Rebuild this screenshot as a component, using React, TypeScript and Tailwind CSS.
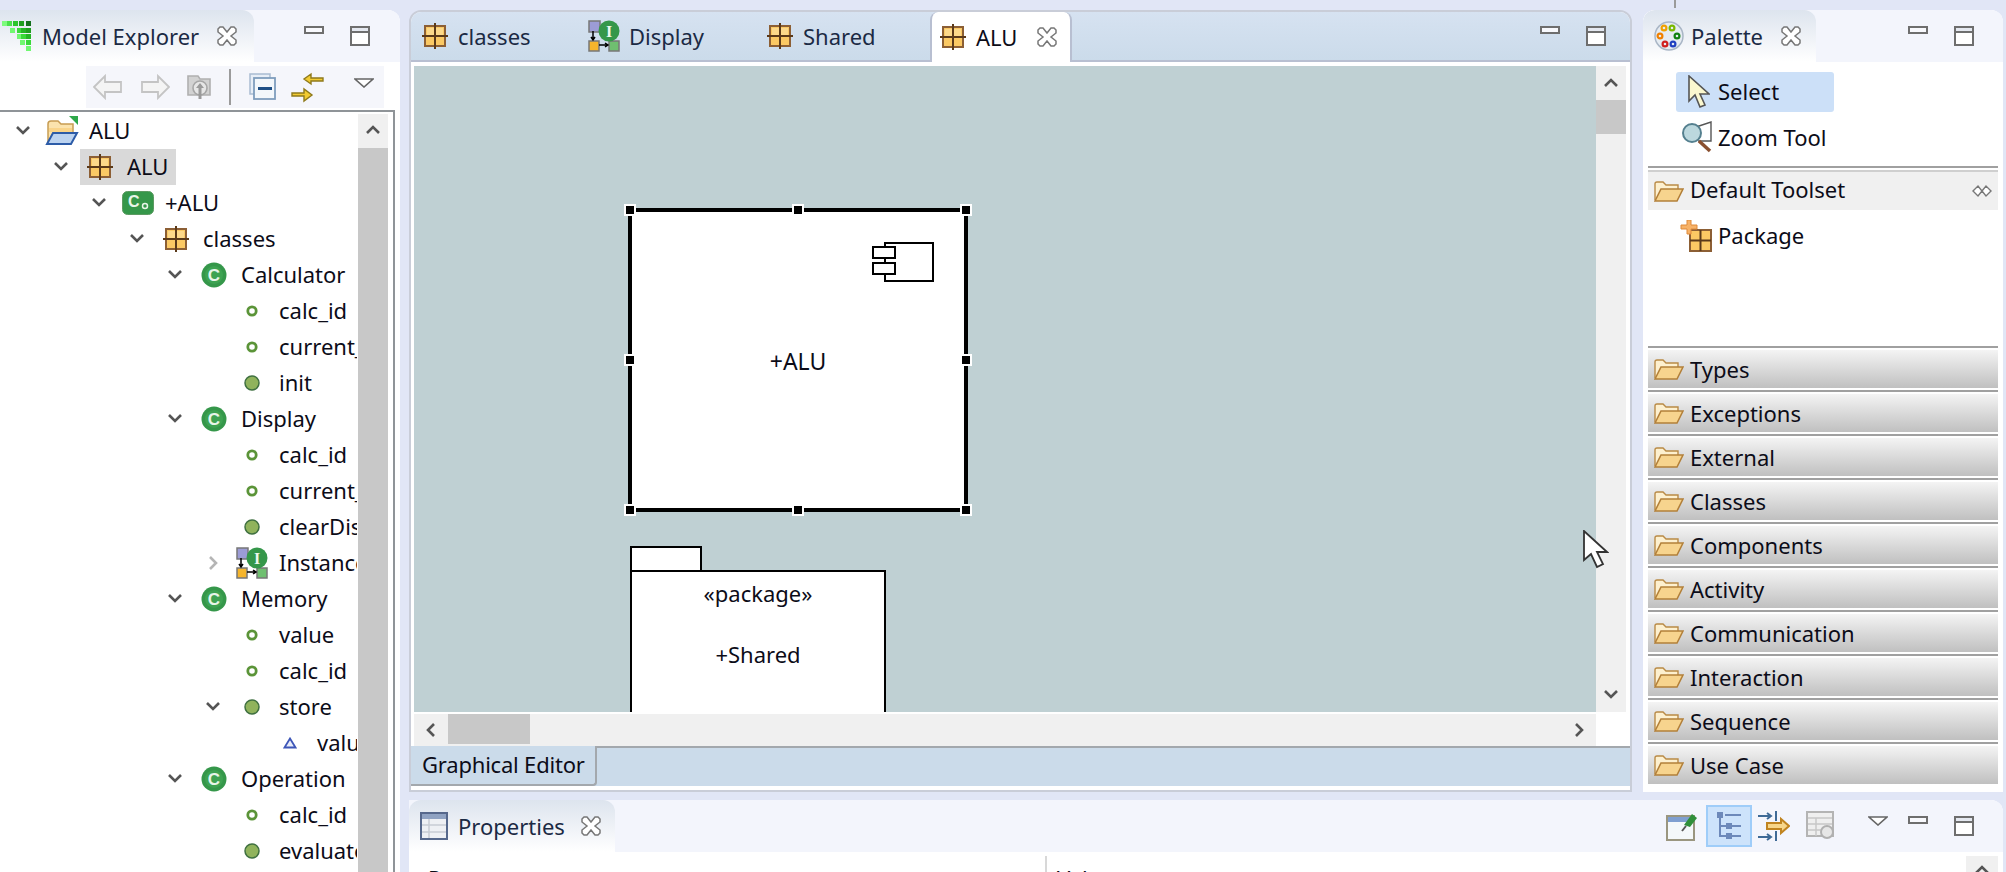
import React from 'react';

const FONT = "font-['Noto_Sans',sans-serif]";

const Chevron = ({ dir, color = '#555' }: { dir: 'down' | 'right' | 'up' | 'left'; color?: string }) => {
  const d = {
    down: 'M2 3 L8 9 L14 3',
    up: 'M2 9 L8 3 L14 9',
    right: 'M5 1 L11 7 L5 13',
    left: 'M11 1 L5 7 L11 13',
  }[dir];
  return (
    <svg width="16" height="14" viewBox="0 0 16 14">
      <path d={d} fill="none" stroke={color} strokeWidth="2.6" />
    </svg>
  );
};

const PackageIcon = () => (
  <svg width="26" height="26" viewBox="0 0 26 26">
    <rect x="3" y="3" width="20" height="20" fill="#fbc964" stroke="#8c5f35" strokeWidth="2" />
    <rect x="5" y="5" width="7" height="7" fill="#fdd98a" />
    <rect x="14" y="5" width="7" height="7" fill="#fdd98a" />
    <path d="M13 0 V26 M0 13 H26" stroke="#5b3a1a" strokeWidth="2" />
  </svg>
);

const ClassIcon = () => (
  <svg width="26" height="26" viewBox="0 0 26 26">
    <circle cx="13" cy="13" r="12.5" fill="#35974a" />
    <circle cx="13" cy="13" r="9" fill="#3ea352" />
    <text x="13" y="19" textAnchor="middle" fontSize="17" fontWeight="700" fill="#e8f5e8" fontFamily="Liberation Sans">C</text>
  </svg>
);

const ComponentClassIcon = () => (
  <svg width="32" height="24" viewBox="0 0 32 24">
    <rect x="0.5" y="0.5" width="31" height="23" rx="5" fill="#35974a" stroke="#5c9a62" />
    <text x="6" y="16" fontSize="16" fontWeight="700" fill="#e8f5e8" fontFamily="Liberation Sans">C</text>
    <circle cx="23" cy="15" r="2.5" fill="none" stroke="#e8f5e8" strokeWidth="1.5" />
  </svg>
);

const AttrIcon = () => (
  <svg width="12" height="12" viewBox="0 0 12 12">
    <circle cx="6" cy="6" r="4.2" fill="#fff" stroke="#5b9438" strokeWidth="2.8" />
  </svg>
);

const OpIcon = () => (
  <svg width="16" height="16" viewBox="0 0 16 16">
    <circle cx="8" cy="8" r="7" fill="#90b35c" stroke="#3f7040" strokeWidth="1.5" />
  </svg>
);

const ParamIcon = () => (
  <svg width="14" height="12" viewBox="0 0 14 12">
    <path d="M7 1.5 L12.5 10.5 H1.5 Z" fill="#e8ecfa" stroke="#3d56b8" strokeWidth="1.8" />
  </svg>
);

const InstanceIcon = () => (
  <svg width="32" height="32" viewBox="0 0 32 32">
    <rect x="1" y="1" width="11" height="11" fill="#9c9cd6" stroke="#777" strokeWidth="1.5" />
    <rect x="1" y="21" width="10" height="10" fill="#f6b52c" stroke="#777" strokeWidth="1.5" />
    <rect x="21" y="21" width="10" height="10" fill="#6fbf70" stroke="#777" strokeWidth="1.5" />
    <path d="M5 11 V20 M3 17 L5 20 L7 17 M11 25 H20 M17 23 L20 25 L17 27" fill="none" stroke="#000" strokeWidth="1.5" />
    <circle cx="21" cy="11" r="10.5" fill="#35974a" />
    <text x="21" y="17" textAnchor="middle" fontSize="16" fontWeight="700" fill="#eef8ee" fontFamily="Liberation Serif">I</text>
  </svg>
);

const ProjectIcon = () => (
  <svg width="34" height="30" viewBox="0 0 34 30">
    <path d="M3 26 V8 Q3 5 6 5 H13 L16 8 H28 V16" fill="#fbe3ad" stroke="#c79c52" strokeWidth="1.5" />
    <path d="M4 12 H27 V16 H4 Z" fill="#f9d48a" />
    <path d="M2 28 L8 17 H32 L26 28 Z" fill="#bcd3f0" stroke="#2d5ca8" strokeWidth="2" />
    <path d="M24 0 H33 V9 Z" fill="#2ea84a" />
  </svg>
);

const FolderIcon = () => (
  <svg width="30" height="22" viewBox="0 0 30 22">
    <path d="M1 20 V4 Q1 2 3 2 H9 L12 5 H24 V10" fill="#fdf0cf" stroke="#b98a46" strokeWidth="1.4" />
    <path d="M1 21 L7 9 H29 L23 21 Z" fill="#f7d48e" stroke="#b3803a" strokeWidth="1.6" />
  </svg>
);

const CloseIcon = () => (
  <svg width="20" height="20" viewBox="0 0 20 20">
    <path
      d="M1 3 L3 1 L6 1 L10 6 L14 1 L17 1 L19 3 L19 6 L14 10 L19 14 L19 17 L17 19 L14 19 L10 14 L6 19 L3 19 L1 17 L1 14 L6 10 L1 6 Z"
      fill="#fff"
      stroke="#777"
      strokeWidth="1.5"
    />
  </svg>
);

const WinControls = () => (
  <div className="flex items-start gap-[26px]">
    <div className="w-[20px] h-[8px] border-2 border-[#6e6e6e] bg-[#f8f9fd]" />
    <div className="w-[20px] h-[20px] border-2 border-[#6e6e6e] bg-white">
      <div className="h-[3px] bg-[#e4e8f0] border-b-2 border-[#6e6e6e] box-content" />
    </div>
  </div>
);

const MenuTriangle = () => (
  <svg width="20" height="10" viewBox="0 0 20 10">
    <path d="M1 1 H19 L10 9 Z" fill="#fff" stroke="#666" strokeWidth="1.6" />
  </svg>
);

const ExplorerLogo = () => (
  <svg width="30" height="30" viewBox="0 0 30 30">
    {[
      [0, 0, '#7dfb7d'], [5, 0, '#4be04b'], [11, 0, '#2bc42b'], [17, 0, '#1f9e1f'], [24, 0, '#14701c'],
      [8, 7, '#70f870'], [15, 7, '#39d839'], [19, 7, '#25b425'], [24, 7, '#1f9e1f'],
      [15, 13, '#70f870'], [19, 13, '#39d839'], [24, 13, '#25b425'],
      [18, 19, '#70f870'], [24, 19, '#39d839'],
      [24, 25, '#70f870'],
    ].map(([x, y, c], i) => (
      <rect key={i} x={x as number} y={y as number} width="5" height="5" fill={c as string} />
    ))}
  </svg>
);

const PaletteLogo = () => (
  <svg width="30" height="30" viewBox="0 0 30 30">
    <circle cx="15" cy="15" r="14" fill="#e6ecf2" stroke="#a9b6c6" strokeWidth="1.5" />
    {[
      [10, 7, '#f0a000'], [18, 7, '#7ab800'], [6, 15, '#f08000'], [23, 15, '#108010'],
      [11, 23, '#d02020'], [19, 23, '#2040c0'],
    ].map(([x, y, c], i) => (
      <circle key={i} cx={x as number} cy={y as number} r="2.4" fill="none" stroke={c as string} strokeWidth="2.2" />
    ))}
  </svg>
);

const rows: { d: number; icon: string; label: string; chev?: 'down' | 'right'; selected?: boolean }[] = [
  { d: 0, icon: 'project', label: 'ALU', chev: 'down' },
  { d: 1, icon: 'package', label: 'ALU', chev: 'down', selected: true },
  { d: 2, icon: 'component', label: '+ALU', chev: 'down' },
  { d: 3, icon: 'package', label: 'classes', chev: 'down' },
  { d: 4, icon: 'class', label: 'Calculator', chev: 'down' },
  { d: 5, icon: 'attr', label: 'calc_id' },
  { d: 5, icon: 'attr', label: 'current_value' },
  { d: 5, icon: 'op', label: 'init' },
  { d: 4, icon: 'class', label: 'Display', chev: 'down' },
  { d: 5, icon: 'attr', label: 'calc_id' },
  { d: 5, icon: 'attr', label: 'current_value' },
  { d: 5, icon: 'op', label: 'clearDisplay' },
  { d: 5, icon: 'instance', label: 'InstanceDiagram', chev: 'right' },
  { d: 4, icon: 'class', label: 'Memory', chev: 'down' },
  { d: 5, icon: 'attr', label: 'value' },
  { d: 5, icon: 'attr', label: 'calc_id' },
  { d: 5, icon: 'op', label: 'store', chev: 'down' },
  { d: 6, icon: 'param', label: 'value' },
  { d: 4, icon: 'class', label: 'Operation', chev: 'down' },
  { d: 5, icon: 'attr', label: 'calc_id' },
  { d: 5, icon: 'op', label: 'evaluate' },
];

const treeIcon = (name: string) => {
  switch (name) {
    case 'project': return <ProjectIcon />;
    case 'package': return <PackageIcon />;
    case 'component': return <ComponentClassIcon />;
    case 'class': return <ClassIcon />;
    case 'attr': return <AttrIcon />;
    case 'op': return <OpIcon />;
    case 'param': return <ParamIcon />;
    default: return <InstanceIcon />;
  }
};

const TreeRow = ({ d, icon, label, chev, selected }: (typeof rows)[number]) => (
  <div className="flex items-center h-[36px] whitespace-nowrap" style={{ paddingLeft: 38 * d + 10 }}>
    <div className="w-[26px] flex items-center justify-center shrink-0">
      {chev && <Chevron dir={chev} color={chev === 'right' ? '#b5b5b5' : '#555'} />}
    </div>
    <div className={`ml-[6px] h-[36px] flex items-center ${selected ? 'bg-[#d9d9d9]' : ''}`}>
      <div className="w-[40px] flex items-center justify-center shrink-0">{treeIcon(icon)}</div>
      <span className="pl-[7px] pr-[8px] pb-[2px] text-[22px] leading-[34px] text-[#0c0c18]">{label}</span>
    </div>
  </div>
);

const ModelExplorer = () => (
  <aside className="w-[400px] h-[862px] shrink-0 bg-white rounded-tr-[12px] flex flex-col overflow-hidden">
    <div className="h-[52px] shrink-0 flex bg-[#f3f5fc]">
      <div className="w-[254px] h-full flex items-center pl-[2px] bg-linear-to-b from-[#dde4ee] to-white rounded-tr-[12px]">
        <ExplorerLogo />
        <span className="ml-[10px] text-[22px] text-[#1b2a44]">Model Explorer</span>
        <span className="ml-[18px] flex"><CloseIcon /></span>
      </div>
      <div className="ml-[50px] pt-[16px]"><WinControls /></div>
    </div>
    <div className="h-[48px] shrink-0 pt-[4px] pl-[86px]">
      <div className="w-[298px] h-[42px] bg-[#f5f6fb] flex items-center pl-[7px]">
        <svg width="30" height="26" viewBox="0 0 30 26">
          <path d="M1 13 L12 2 V8 H28 V18 H12 V24 Z" fill="#f4f4f4" stroke="#c4c4c4" strokeWidth="1.8" />
        </svg>
        <svg className="ml-[17px]" width="30" height="26" viewBox="0 0 30 26">
          <path d="M29 13 L18 2 V8 H2 V18 H18 V24 Z" fill="#f4f4f4" stroke="#c4c4c4" strokeWidth="1.8" />
        </svg>
        <svg className="ml-[16px]" width="26" height="28" viewBox="0 0 26 28">
          <path d="M2 3 H12 L14 6 H24 V22 H2 Z" fill="#d2d2d2" stroke="#b0b0b0" strokeWidth="1.6" />
          <circle cx="14" cy="15" r="7" fill="#e6e6e6" stroke="#a6a6a6" strokeWidth="1.6" />
          <path d="M14 10 L18 15 H15.5 V26 H12.5 V15 H10 Z" fill="#9a9a9a" />
        </svg>
        <div className="ml-[17px] w-[2px] h-[36px] bg-[#9b9b9b]" />
        <svg className="ml-[18px]" width="28" height="28" viewBox="0 0 28 28">
          <rect x="1" y="1" width="20" height="20" fill="#e7eef7" stroke="#a9bcd2" strokeWidth="1.5" />
          <rect x="5" y="5" width="21" height="21" fill="#f3f7fb" stroke="#7f9dbd" strokeWidth="1.8" />
          <rect x="9" y="14" width="14" height="3" fill="#1e4f86" />
        </svg>
        <svg className="ml-[14px]" width="34" height="34" viewBox="0 0 34 34">
          <path d="M32 8 H20 V4 L13 9 L20 14 V11 H32 Z" fill="#f2cb32" stroke="#8f7a1c" strokeWidth="1.4" />
          <path d="M1 26 H13 V31 L21 25 L13 19 V23 H1 Z" fill="#f2cb32" stroke="#8f7a1c" strokeWidth="1.4" />
        </svg>
        <div className="ml-[29px] mb-[8px] flex"><MenuTriangle /></div>
      </div>
    </div>
    <div className="flex-1 min-h-0 w-[395px] flex border-t-2 border-r-2 border-[#8f9498]">
      <div className="w-[358px] shrink-0 overflow-hidden pt-px h-[762px]">
        <div className="w-[357px] overflow-hidden">
          {rows.map((r, i) => (
            <TreeRow key={i} {...r} />
          ))}
        </div>
      </div>
      <div className="w-[30px] shrink-0 mt-[2px] flex flex-col">
        <div className="h-[34px] bg-[#f0f0f0] flex items-center justify-center"><Chevron dir="up" /></div>
        <div className="flex-1 bg-[#c8c8c8]" />
      </div>
    </div>
  </aside>
);

const EditorTab = ({ w, pl, gap, icon, label }: { w: string; pl: string; gap: string; icon: React.ReactNode; label: string }) => (
  <div className={`h-[48px] flex items-center shrink-0 ${w} ${pl}`}>
    <span className="flex">{icon}</span>
    <span className={`${gap} text-[22px] text-[#1b2a44]`}>{label}</span>
  </div>
);

const GraphNodes = () => (
  <>
    <div className="absolute left-[214px] top-[142px] w-[340px] h-[304px] border-4 border-black bg-white flex items-center justify-center">
      {[
        '-left-2 -top-2',
        'left-1/2 -translate-x-1/2 -top-2',
        '-right-2 -top-2',
        '-left-2 top-1/2 -translate-y-1/2',
        '-right-2 top-1/2 -translate-y-1/2',
        '-left-2 -bottom-2',
        'left-1/2 -translate-x-1/2 -bottom-2',
        '-right-2 -bottom-2',
      ].map((pos) => (
        <div key={pos} className={`absolute w-[12px] h-[12px] bg-black border-2 border-white ${pos}`} />
      ))}
      <svg className="absolute left-[240px] top-[30px]" width="62" height="40" viewBox="0 0 62 40">
        <rect x="13" y="1" width="48" height="38" fill="#fff" stroke="#000" strokeWidth="2" />
        <rect x="1" y="5" width="22" height="11" fill="#fff" stroke="#000" strokeWidth="2" />
        <rect x="1" y="21" width="22" height="11" fill="#fff" stroke="#000" strokeWidth="2" />
      </svg>
      <span className="pt-[2px] text-[23px] text-[#0c0c18]">+ALU</span>
    </div>
    <div className="absolute left-[216px] top-[480px] w-[72px] h-[26px] border-2 border-black bg-white" />
    <div className="absolute left-[216px] top-[504px] w-[256px] h-[160px] border-2 border-black bg-white text-center text-[22px] leading-[30px] text-[#0c0c18] pt-[6px]">
      <div>«package»</div>
      <div className="mt-[31px]">+Shared</div>
    </div>
  </>
);

const Editor = () => (
  <section className="w-[1223px] h-full shrink-0 bg-white rounded-t-[12px] border-2 border-[#c9cdd8] flex flex-col overflow-hidden">
    <div className="h-[50px] shrink-0 flex bg-linear-to-b from-[#d6e2f1] to-[#cbdbea] border-b-2 border-[#b8bfd1]">
      <EditorTab w="w-[167px]" pl="pl-[11px]" gap="ml-[10px]" icon={<PackageIcon />} label="classes" />
      <EditorTab w="w-[179px]" pl="pl-[10px]" gap="ml-[9px]" icon={<InstanceIcon />} label="Display" />
      <EditorTab w="w-[173px]" pl="pl-[10px]" gap="ml-[10px]" icon={<PackageIcon />} label="Shared" />
      <div className="w-[142px] h-[50px] shrink-0 bg-white rounded-t-[8px] border-x-2 border-[#b8bfd1] flex items-center pl-[8px]">
        <PackageIcon />
        <span className="ml-[10px] text-[22px] text-[#0c0c18]">ALU</span>
        <span className="ml-[20px] flex"><CloseIcon /></span>
      </div>
      <div className="ml-auto mr-[24px] pt-[14px]"><WinControls /></div>
    </div>
    <div className="pt-[4px] pl-[3px] bg-white flex">
      <div className="relative w-[1182px] h-[646px] bg-[#bfd0d3] overflow-hidden">
        <GraphNodes />
      </div>
      <div className="w-[30px] h-[646px] bg-[#f0f0f0] flex flex-col">
        <div className="h-[34px] pt-[2px] flex items-center justify-center"><Chevron dir="up" /></div>
        <div className="h-[34px] bg-[#c8c8c8]" />
        <div className="mt-auto h-[34px] flex items-center justify-center"><Chevron dir="down" /></div>
      </div>
    </div>
    <div className="mt-[2px] ml-[3px] w-[1182px] h-[32px] bg-[#f0f0f0] flex items-center">
      <div className="w-[34px] flex justify-center"><Chevron dir="left" /></div>
      <div className="w-[82px] h-[30px] self-start bg-[#c8c8c8]" />
      <div className="ml-auto w-[34px] flex justify-center"><Chevron dir="right" /></div>
    </div>
    <div className="h-[40px] shrink-0 flex bg-[#cbdbea]">
      <div className="w-[186px] h-[40px] shrink-0 border-r-2 border-b-2 border-[#a3a8ad] rounded-br-[4px] flex items-center pl-[11px] pb-[2px]">
        <span className="text-[22px] text-[#0c0c18] tracking-[-0.2px]">Graphical Editor</span>
      </div>
      <div className="flex-1 border-t-2 border-[#a3a8ad]" />
    </div>
  </section>
);

const drawers = ['Types', 'Exceptions', 'External', 'Classes', 'Components', 'Activity', 'Communication', 'Interaction', 'Sequence', 'Use Case'];

const Palette = () => (
  <section className="w-[360px] h-full shrink-0 bg-white rounded-t-[12px] flex flex-col overflow-hidden">
    <div className="h-[52px] shrink-0 flex bg-[#f3f5fc]">
      <div className="w-[173px] h-full flex items-center pl-[11px] bg-linear-to-b from-[#dde4ee] to-white rounded-t-[12px]">
        <PaletteLogo />
        <span className="ml-[7px] text-[22px] text-[#1b2a44]">Palette</span>
        <span className="ml-[18px] flex"><CloseIcon /></span>
      </div>
      <div className="ml-[92px] pt-[16px]"><WinControls /></div>
    </div>
    <div className="pt-[10px] pl-[33px]">
      <div className="w-[158px] h-[40px] bg-[#cce0f8] rounded-[3px] flex items-center pl-[12px]">
        <svg width="22" height="34" viewBox="0 0 22 34">
          <path d="M1 1 V26 L7 20 L12 32 L17 30 L12 19 H21 Z" fill="#fbf8cf" stroke="#555" strokeWidth="1.6" />
        </svg>
        <span className="ml-[8px] pb-[2px] text-[22px] text-[#0c0c18]">Select</span>
      </div>
      <div className="mt-[6px] h-[38px] flex items-center pl-[6px] whitespace-nowrap">
        <svg width="30" height="32" viewBox="0 0 30 32">
          <path d="M14 6 L29 1 V20 H16" fill="#fff" stroke="#555" strokeWidth="1.4" />
          <path d="M17 20 L28 30" stroke="#8a5030" strokeWidth="3.5" />
          <circle cx="10" cy="12" r="9" fill="#bcd8de" stroke="#55808f" strokeWidth="2" />
        </svg>
        <span className="ml-[6px] text-[22px] text-[#0c0c18]">Zoom Tool</span>
      </div>
    </div>
    <div className="mx-[5px] mt-[10px] h-[6px] border-t-2 border-b-2 border-t-[#a0a0a0] border-b-[#cfcfcf]" />
    <div className="mx-[5px] h-[38px] bg-[#f0f0f0] flex items-center pl-[6px]">
      <FolderIcon />
      <span className="ml-[6px] pb-[4px] text-[22px] text-[#0c0c18]">Default Toolset</span>
      <svg className="ml-auto mr-[6px]" width="20" height="14" viewBox="0 0 20 14">
        <path d="M1 7 L6 2 L10 7 L6 12 Z M10 7 L14 2 L19 7 L14 12 Z" fill="#fff" stroke="#777" strokeWidth="1.4" />
      </svg>
    </div>
    <div className="h-[136px] pl-[37px] pt-[10px]">
      <div className="flex items-center h-[32px]">
        <svg width="32" height="32" viewBox="0 0 32 32">
          <rect x="10" y="10" width="21" height="21" fill="#fbc964" stroke="#8c5f35" strokeWidth="2" />
          <path d="M20.5 10 V31 M10 20.5 H31" stroke="#5b3a1a" strokeWidth="2" />
          <path d="M7 0 H11 V5 H17 V9 H11 V14 H7 V9 H1 V5 H7 Z" fill="#f7b267" stroke="#df8a3a" strokeWidth="1" />
        </svg>
        <span className="ml-[6px] pb-[2px] text-[22px] text-[#0c0c18]">Package</span>
      </div>
    </div>
    <div className="mx-[5px]">
      {drawers.map((name) => (
        <div key={name} className="h-[44px] border-t-2 border-[#a0a0a0] pt-[2px]">
          <div className="h-[38px] flex items-center pl-[6px] bg-linear-to-b from-[#f4f4f4] to-[#c0c0c0]">
            <FolderIcon />
            <span className="ml-[6px] text-[22px] text-[#0c0c18]">{name}</span>
          </div>
        </div>
      ))}
    </div>
  </section>
);

const Properties = () => (
  <section className="flex-1 min-h-0 bg-white rounded-tr-[12px] flex flex-col overflow-hidden">
    <div className="h-[52px] shrink-0 flex items-center bg-[#f3f5fc]">
      <div className="w-[206px] h-full flex items-center pl-[11px] bg-linear-to-b from-[#dde4ee] to-white rounded-t-[12px]">
        <svg width="28" height="28" viewBox="0 0 28 28">
          <rect x="1" y="1" width="26" height="26" fill="#eef0f4" stroke="#56688c" strokeWidth="2" />
          <rect x="2" y="2" width="24" height="5" fill="#8fa2c2" />
          <path d="M2 13 H26 M2 20 H26 M9 7 V26" stroke="#c8ccd4" strokeWidth="1.5" />
        </svg>
        <span className="ml-[10px] text-[22px] text-[#1b2a44]">Properties</span>
        <span className="ml-[16px] flex"><CloseIcon /></span>
      </div>
      <svg className="ml-[1051px]" width="32" height="30" viewBox="0 0 32 30">
        <rect x="1" y="5" width="27" height="24" fill="#f4f8fa" stroke="#9a9680" strokeWidth="2" />
        <rect x="2" y="6" width="25" height="5" fill="#7f9fd0" />
        <path d="M18 14 L26 3 L31 7 L24 16 Z" fill="#2f8f3a" />
        <path d="M20 15 L16 20" stroke="#555" strokeWidth="2" />
      </svg>
      <div className="ml-[8px] w-[46px] h-[42px] bg-[#cde3fb] border-2 border-[#9fcdf9] flex items-center justify-center">
        <svg width="24" height="28" viewBox="0 0 24 28">
          <path d="M3 4 V24 H10 M3 14 H10 M8 3 H24 M14 14 H24 M14 24 H24" fill="none" stroke="#6d89ba" strokeWidth="2" />
          <rect x="0" y="0" width="6" height="6" fill="#6d89ba" />
          <rect x="9" y="11" width="6" height="6" fill="#6d89ba" />
          <rect x="9" y="21" width="6" height="6" fill="#6d89ba" />
        </svg>
      </div>
      <svg className="ml-[6px]" width="32" height="30" viewBox="0 0 32 30">
        <path d="M0 5 H12 M9 2 L13 5 L9 8 M0 26 H12 M9 23 L13 26 L9 29" fill="none" stroke="#3e6a96" strokeWidth="2" />
        <path d="M18 0 V10 M18 20 V30" stroke="#3e6a96" strokeWidth="2" />
        <path d="M9 12 H23 V8 L31 15 L23 22 V18 H9 Z" fill="#f7d68a" stroke="#c08420" strokeWidth="2" />
      </svg>
      <svg className="ml-[16px]" width="30" height="30" viewBox="0 0 30 30">
        <rect x="1" y="1" width="26" height="24" fill="#efefef" stroke="#b4b4b4" strokeWidth="2" />
        <path d="M2 7 H26 M2 13 H26 M2 19 H26 M10 7 V25" stroke="#c8c8c8" strokeWidth="1.5" />
        <circle cx="21" cy="21" r="6" fill="#e6e6e6" stroke="#b0b0b0" strokeWidth="2" />
      </svg>
      <div className="ml-[32px] self-start pt-[16px] flex"><MenuTriangle /></div>
      <div className="ml-[20px] self-start pt-[16px]"><WinControls /></div>
    </div>
    <div className="flex-1 flex overflow-hidden">
      <div className="w-[636px] shrink-0 pl-[19px] pt-[11px] text-[22px] leading-[30px] text-[#0c0c18] whitespace-nowrap overflow-hidden">Property</div>
      <div className="mt-[4px] w-[2px] bg-[#d8d8d8]" />
      <div className="w-[919px] pl-[10px] pt-[11px] text-[22px] leading-[30px] text-[#0c0c18]">Value</div>
      <div className="mt-[4px] w-[32px] bg-[#f0f0f0] flex justify-center pt-[8px]"><Chevron dir="up" /></div>
    </div>
  </section>
);

export default function App() {
  return (
    <div className={`relative w-[2006px] h-[872px] overflow-hidden bg-[#e1e6f6] pt-[10px] flex ${FONT}`}>
      <ModelExplorer />
      <div className="ml-[9px] w-[1594px] h-[862px] flex flex-col">
        <div className="h-[782px] shrink-0 flex">
          <Editor />
          <div className="w-[11px] shrink-0" />
          <Palette />
        </div>
        <div className="h-[8px] shrink-0" />
        <Properties />
      </div>
      {/* mouse pointer and the stub of a sash at the top */}
      <svg className="absolute left-[1583px] top-[530px]" width="26" height="40" viewBox="0 0 26 40">
        <path d="M1 1 V30 L8 24 L14 37 L20 34 L14 22 H24 Z" fill="#fff" stroke="#333" strokeWidth="1.8" />
      </svg>
      <div className="absolute left-[1674px] top-0 w-[2px] h-[8px] bg-[#9a9a9a]" />
    </div>
  );
}
